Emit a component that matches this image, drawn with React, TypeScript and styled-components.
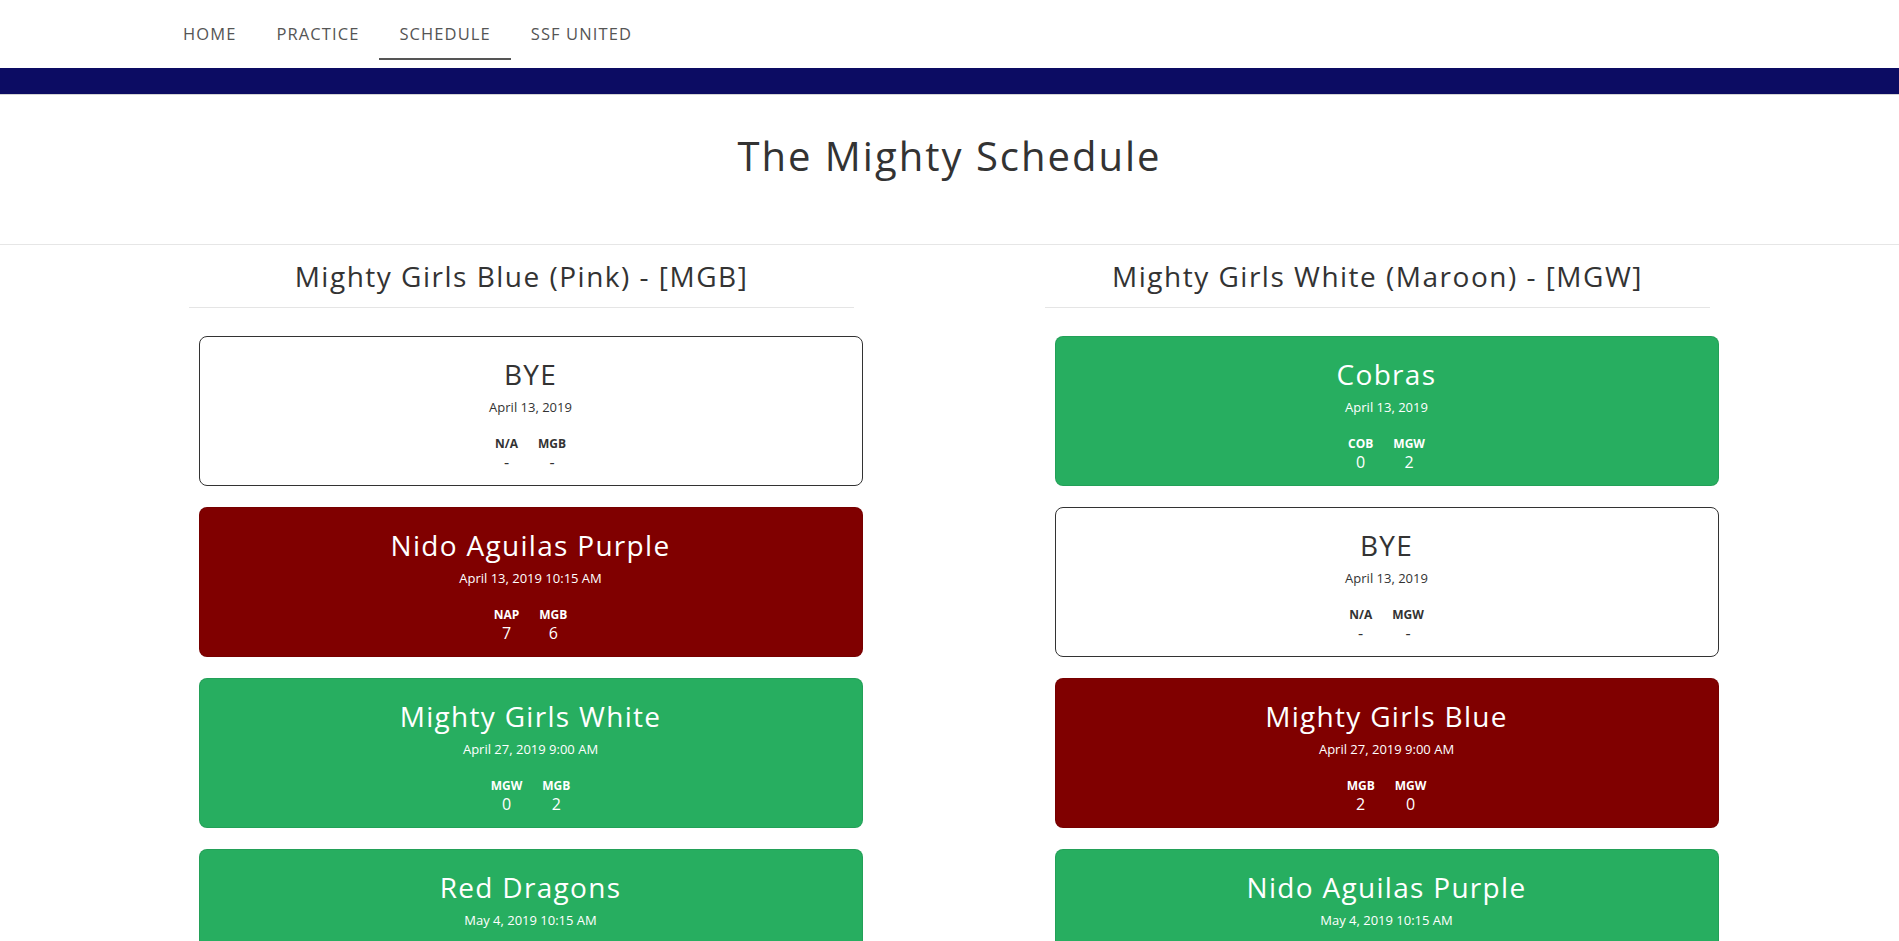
import React from "react";
import styled, { createGlobalStyle } from "styled-components";

const GlobalStyle = createGlobalStyle`
  html, body { margin: 0; padding: 0; background: #fff; }
  body {
    font-family: "Open Sans", "Noto Sans", Arial, sans-serif;
    color: #333;
    -webkit-font-smoothing: antialiased;
  }
  * { box-sizing: border-box; }
`;

const NavBar = styled.nav`
  height: 68px;
  display: flex;
  align-items: flex-start;
  padding-left: 163px;
  background: #fff;
`;

const NavItem = styled.a<{ $active?: boolean }>`
  display: block;
  height: 60px;
  padding: 22px 20px 0;
  font-size: 16.5px;
  line-height: 24px;
  color: #555;
  text-transform: uppercase;
  text-decoration: none;
  letter-spacing: 1.1px;
  border-bottom: 2px solid ${(p) => (p.$active ? "#555" : "transparent")};
`;

const BlueBar = styled.div`
  height: 27px;
  background: #0c0c63;
  border-bottom: 1px solid #d4d4d4;
`;

const Header = styled.header`
  padding: 37px 0 64px;
  text-align: center;
  border-bottom: 1px solid #e6e6e6;
`;

const Title = styled.h1`
  margin: 0;
  font-size: 40px;
  line-height: 48px;
  font-weight: 400;
  color: #333;
  letter-spacing: 2px;
`;

const Columns = styled.main`
  display: grid;
  grid-template-columns: 1fr 1fr;
  max-width: 1712px;
  margin: 0 auto;
`;

const Column = styled.section`
  display: flex;
  flex-direction: column;
`;

const TeamHeading = styled.h2`
  margin: 0 auto;
  width: 665px;
  padding: 14px 0 14px;
  font-size: 28px;
  line-height: 34px;
  font-weight: 400;
  text-align: center;
  color: #333;
  letter-spacing: 1.5px;
  border-bottom: 1px solid #e5e5e5;
`;

const CardList = styled.div`
  display: flex;
  flex-direction: column;
  gap: 21px;
  padding: 28px 87px 40px 105px;
`;

type Kind = "bye" | "win" | "loss";

const Card = styled.div<{ $kind: Kind }>`
  height: 150px;
  border-radius: 8px;
  padding: 20px 20px 13px;
  text-align: center;
  border: 1px solid
    ${(p) => (p.$kind === "bye" ? "#333" : "rgba(0,0,0,0.08)")};
  background: ${(p) =>
    p.$kind === "win" ? "#27ae60" : p.$kind === "loss" ? "#800000" : "#fff"};
  color: ${(p) => (p.$kind === "bye" ? "#333" : "#fff")};
`;

const Opponent = styled.div`
  font-size: 28px;
  line-height: 34px;
  letter-spacing: 1.3px;
`;

const DateLine = styled.div`
  margin-top: 6px;
  font-size: 13px;
  line-height: 20px;
`;

const ScoreRow = styled.div`
  margin-top: 19px;
  display: inline-flex;
  gap: 20px;
`;

const ScoreCol = styled.div`
  display: flex;
  flex-direction: column;
  align-items: center;
`;

const Abbr = styled.span`
  font-size: 12px;
  line-height: 16px;
  font-weight: 700;
`;

const Score = styled.span`
  font-size: 16px;
  line-height: 20px;
`;

type Game = {
  opp: string;
  date: string;
  kind: Kind;
  a: string;
  b: string;
  sa: string;
  sb: string;
};

const left: Game[] = [
  { opp: "BYE", date: "April 13, 2019", kind: "bye", a: "N/A", b: "MGB", sa: "-", sb: "-" },
  { opp: "Nido Aguilas Purple", date: "April 13, 2019 10:15 AM", kind: "loss", a: "NAP", b: "MGB", sa: "7", sb: "6" },
  { opp: "Mighty Girls White", date: "April 27, 2019 9:00 AM", kind: "win", a: "MGW", b: "MGB", sa: "0", sb: "2" },
  { opp: "Red Dragons", date: "May 4, 2019 10:15 AM", kind: "win", a: "RDR", b: "MGB", sa: "1", sb: "3" },
];

const right: Game[] = [
  { opp: "Cobras", date: "April 13, 2019", kind: "win", a: "COB", b: "MGW", sa: "0", sb: "2" },
  { opp: "BYE", date: "April 13, 2019", kind: "bye", a: "N/A", b: "MGW", sa: "-", sb: "-" },
  { opp: "Mighty Girls Blue", date: "April 27, 2019 9:00 AM", kind: "loss", a: "MGB", b: "MGW", sa: "2", sb: "0" },
  { opp: "Nido Aguilas Purple", date: "May 4, 2019 10:15 AM", kind: "win", a: "NAP", b: "MGW", sa: "1", sb: "2" },
];

const GameCard = ({ g }: { g: Game }) => (
  <Card $kind={g.kind}>
    <Opponent>{g.opp}</Opponent>
    <DateLine>{g.date}</DateLine>
    <ScoreRow>
      <ScoreCol>
        <Abbr>{g.a}</Abbr>
        <Score>{g.sa}</Score>
      </ScoreCol>
      <ScoreCol>
        <Abbr>{g.b}</Abbr>
        <Score>{g.sb}</Score>
      </ScoreCol>
    </ScoreRow>
  </Card>
);

export default function App() {
  return (
    <>
      <GlobalStyle />
      <NavBar>
        <NavItem href="#">Home</NavItem>
        <NavItem href="#">Practice</NavItem>
        <NavItem href="#" $active>
          Schedule
        </NavItem>
        <NavItem href="#">SSF United</NavItem>
      </NavBar>
      <BlueBar />
      <Header>
        <Title>The Mighty Schedule</Title>
      </Header>
      <Columns>
        <Column>
          <TeamHeading>Mighty Girls Blue (Pink) - [MGB]</TeamHeading>
          <CardList>
            {left.map((g, i) => (
              <GameCard key={i} g={g} />
            ))}
          </CardList>
        </Column>
        <Column>
          <TeamHeading>Mighty Girls White (Maroon) - [MGW]</TeamHeading>
          <CardList>
            {right.map((g, i) => (
              <GameCard key={i} g={g} />
            ))}
          </CardList>
        </Column>
      </Columns>
    </>
  );
}
